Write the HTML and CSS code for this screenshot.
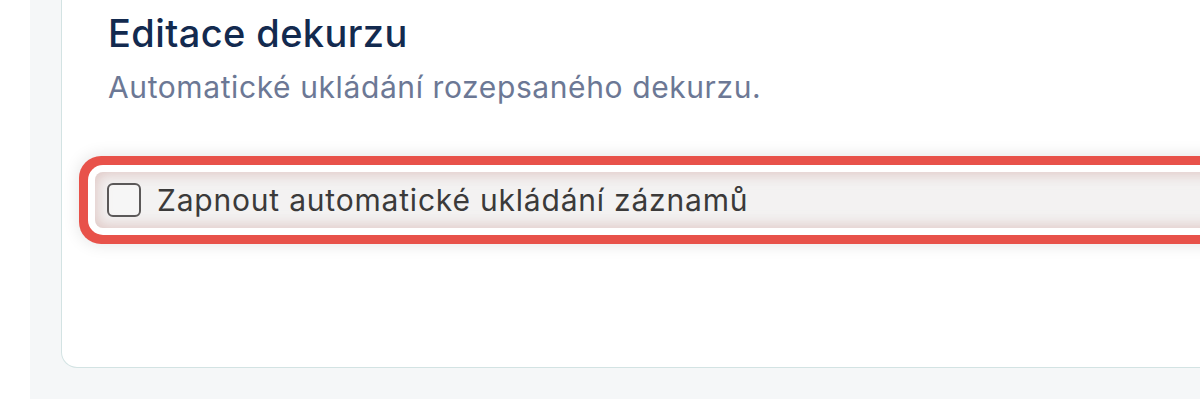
FILE: index.html
```html
<!DOCTYPE html>
<html lang="cs">
<head>
  <meta charset="UTF-8" />
  <meta name="viewport" content="width=device-width, initial-scale=1.0" />
  <title>Editace dekurzu</title>
  <link rel="stylesheet" href="styles.css">
</head>
<body>
  <div class="page">
    <div class="rail"></div>
    <main class="content">
      <section class="card">
        <h2 class="card-title">Editace dekurzu</h2>
        <p class="card-desc">Automatické ukládání rozepsaného dekurzu.</p>
        <label class="option">
          <input type="checkbox" class="option-box">
          <span class="option-text">Zapnout automatické ukládání záznamů</span>
        </label>
      </section>
    </main>
  </div>
</body>
</html>
```

FILE: styles.css
```css
/* Reset */
* { margin: 0; padding: 0; box-sizing: border-box; }
body {
  overflow: hidden;
  background: #fff;
  font-family: Inter, "Noto Sans", sans-serif;
}
.page {
  display: flex;
  width: 100vw;
  height: 100vh;
}
.rail {
  flex: 0 0 30px;
  background: #fff;
}
/* Gray content area holding the settings card */
.content {
  flex: 1;
  background: #f5f7f8;
  padding-left: 31px;
  overflow: hidden;
}
.card {
  width: 1300px;
  background: #fff;
  border: 1px solid #d3e3e3;
  border-top: 0;
  border-radius: 0 0 16px 16px;
  padding: 11px 0 139px 46px;
}
.card-title {
  font-size: 38px;
  line-height: 1.21;
  font-weight: 500;
  letter-spacing: 0.4px;
  color: #132a4f;
}
.card-desc {
  margin-top: 12px;
  font-size: 30px;
  line-height: 1.21;
  letter-spacing: 0.6px;
  color: #6c7895;
}
/* Focused checkbox row: white gap + red ring drawn as shadows */
.option {
  display: flex;
  align-items: center;
  gap: 16px;
  height: 56px;
  margin: 67px 0 0 -13px;
  padding-left: 12px;
  border-radius: 8px;
  background: #f3f2f2;
  box-shadow:
    inset 0 0 14px 2px rgba(205, 160, 155, 0.55),
    0 0 0 7px #fff,
    0 0 0 16px #e8524a,
    0 0 16px 17px rgba(0, 0, 0, 0.10);
  cursor: pointer;
}
.option-box {
  appearance: none;
  width: 34px;
  height: 34px;
  border: 2px solid #5b5858;
  border-radius: 6px;
  background: rgba(255, 255, 255, 0.3);
}
.option-text {
  font-size: 30px;
  letter-spacing: 0.8px;
  color: #3b3a3a;
}
```
